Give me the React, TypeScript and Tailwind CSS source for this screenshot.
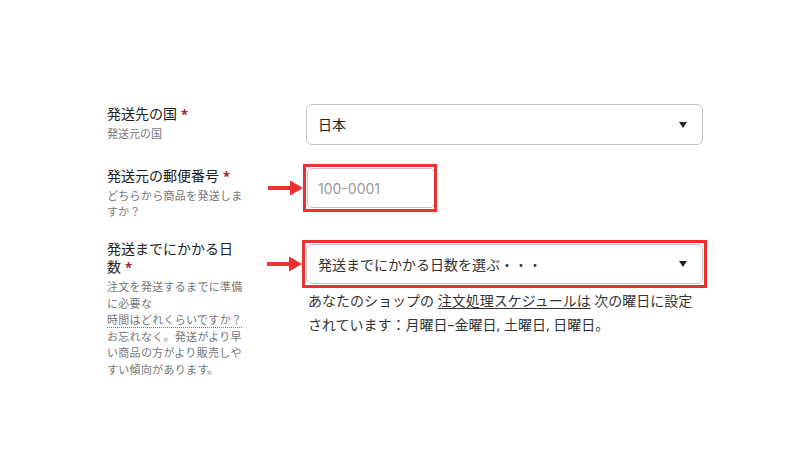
import React from "react";

function Arrow() {
  return (
    <svg
      width="35"
      height="16"
      viewBox="0 0 35 16"
      className="absolute left-[-39px] top-1/2 -translate-y-1/2"
    >
      <rect x="0" y="6" width="24" height="4" fill="#ec2f2f" />
      <polygon points="22,0.5 35,8 22,15.5" fill="#ec2f2f" />
    </svg>
  );
}

function Caret() {
  return (
    <svg width="8" height="6" viewBox="0 0 8 6" className="shrink-0">
      <polygon points="0,0 8,0 4,6" fill="#222" />
    </svg>
  );
}

function Star() {
  return <span className="ml-[4px] text-[13px] text-[#a51c30] font-bold">*</span>;
}

export default function App() {
  return (
    <div className="w-[812px] h-[457px] bg-white font-['Noto_Sans','Noto_Sans_CJK_JP',sans-serif] text-[#222] pt-[104px] pl-[107px] overflow-hidden">
      {/* Row 1 */}
      <div className="flex items-start">
        <div className="w-[199px] shrink-0">
          <div className="w-[136px]">
            <div className="text-[14px] leading-[20px]">
              発送先の国<Star />
            </div>
            <div className="mt-[2px] text-[11px] leading-[16px] text-[#777]">
              発送元の国
            </div>
          </div>
        </div>
        <div className="w-[397px] h-[41px] rounded-[6px] border border-[#c4c4c4] flex items-center justify-between pl-[11px] pr-[15px] text-[14px]">
          <span>日本</span>
          <Caret />
        </div>
      </div>

      {/* Row 2 */}
      <div className="flex items-start mt-[21px]">
        <div className="w-[199px] shrink-0">
          <div className="w-[140px]">
            <div className="text-[14px] leading-[20px]">
              発送元の郵便番号<Star />
            </div>
            <div className="mt-[2px] text-[11px] leading-[16px] tracking-[0.3px] text-[#777]">
              どちらから商品を発送しま
              <br />
              すか？
            </div>
          </div>
        </div>
        <div className="mt-[2px] ml-[1px] relative">
          <div className="w-[128px] h-[40px] rounded-[5px] border border-[#c4c4c4] flex items-center pl-[10px] text-[14px] text-[#9a9a9a] font-['Inter','Noto_Sans',sans-serif]">
            100-0001
          </div>
          <div className="absolute -left-[4px] -top-[4px] -bottom-[4px] -right-[2px] border-[3px] border-[#ec2f2f] pointer-events-none" />
          <Arrow />
        </div>
      </div>

      {/* Row 3 */}
      <div className="flex items-start mt-[20px]">
        <div className="w-[199px] shrink-0">
          <div className="w-[140px]">
            <div className="text-[14px] leading-[18px]">
              発送までにかかる日
              <br />
              数<Star />
            </div>
            <div className="mt-[3px] text-[11px] leading-[16.5px] tracking-[0.3px] text-[#777]">
              注文を発送するまでに準備
              <br />
              に必要な
              <br />
              <span className="border-b border-dotted border-[#777]">
                時間はどれくらいですか？
              </span>
              <br />
              お忘れなく。発送がより早
              <br />
              い商品の方がより販売しや
              <br />
              すい傾向があります。
            </div>
          </div>
        </div>
        <div className="w-[397px] mt-[4px]">
          <div className="relative">
            <div className="h-[40px] rounded-[6px] border border-[#c4c4c4] flex items-center justify-between pl-[11px] pr-[15px] text-[14px] text-[#333]">
              <span>発送までにかかる日数を選ぶ・・・</span>
              <Caret />
            </div>
            <div className="absolute -inset-[4px] border-[3px] border-[#ec2f2f] pointer-events-none" />
            <Arrow />
          </div>
          <div className="mt-[5px] pl-[2px] text-[14px] leading-[24px] text-[#333] whitespace-nowrap">
            あなたのショップの{" "}
            <span className="underline underline-offset-2">注文処理スケジュールは</span>{" "}
            次の曜日に設定
            <br />
            されています：月曜日–金曜日, 土曜日, 日曜日。
          </div>
        </div>
      </div>
    </div>
  );
}
